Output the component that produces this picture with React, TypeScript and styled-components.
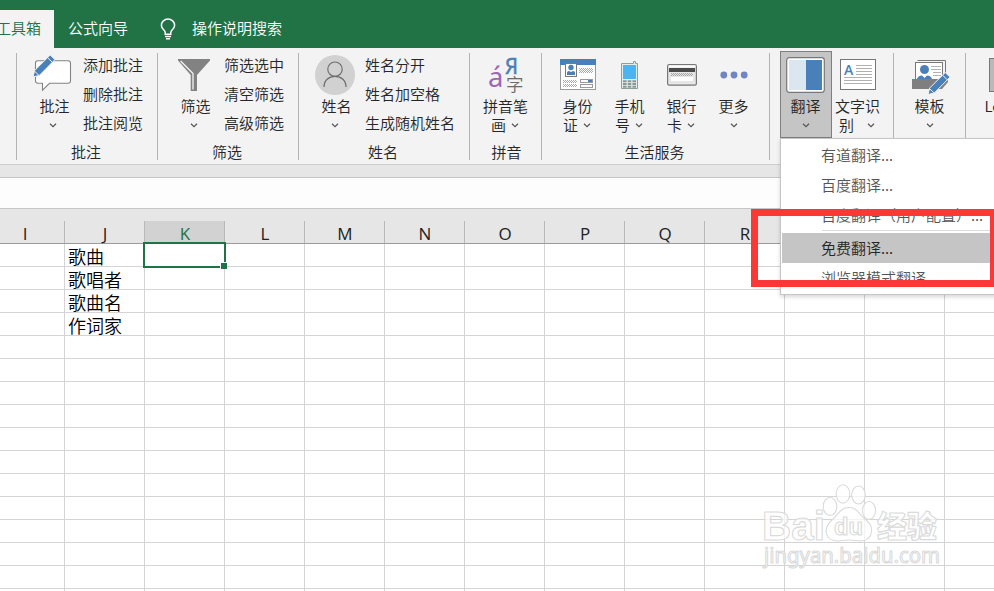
import React from "react";
import styled, { createGlobalStyle, css } from "styled-components";

const GlobalStyle = createGlobalStyle`
  * { box-sizing: border-box; }
  html, body { margin: 0; padding: 0; overflow: hidden; }
  body {
    font-family: "Noto Sans CJK SC", "Noto Sans", sans-serif;
    font-size: 15px;
    font-weight: 350;
    color: #262626;
    background: #fff;
  }
`;

const Window = styled.div`
  position: relative;
  width: 994px;
  height: 591px;
  overflow: hidden;
  display: flex;
  flex-direction: column;
  white-space: nowrap;
`;

const TabBar = styled.header`
  flex: none;
  height: 48px;
  padding-top: 10px;
  display: flex;
  background: #217346;
  color: #fff;
`;

const Tab = styled.div<{ $active?: boolean; $width: number }>`
  width: ${(p) => p.$width}px;
  display: flex;
  align-items: center;
  justify-content: ${(p) => (p.$active ? "flex-end" : "center")};
  padding-right: ${(p) => (p.$active ? 13 : 1)}px;
  padding-bottom: 4px;
  color: ${(p) => (p.$active ? "#217346" : "#fff")};
  background: ${(p) => (p.$active ? "#f3f3f3" : "transparent")};
`;

const TellMe = styled.div`
  margin-left: 17px;
  display: flex;
  align-items: center;
  gap: 15px;
`;

const TellMeText = styled.span`
  padding: 0 0 4px 1px;
`;

const Ribbon = styled.section`
  flex: none;
  height: 117px;
  padding-left: 16px;
  display: flex;
  background: #f3f3f3;
  border-bottom: 1px solid #cfcfcf;
`;

const Divider = styled.div`
  flex: none;
  width: 1px;
  height: 107px;
  margin-top: 5px;
  background: #b4b4b4;
`;

const Group = styled.div<{ $width: number }>`
  flex: none;
  width: ${(p) => p.$width}px;
  display: flex;
  flex-direction: column;
`;

const GroupBody = styled.div<{ $pad: number }>`
  height: 91px;
  padding: 3px 0 0 ${(p) => p.$pad}px;
  display: flex;
`;

const GroupName = styled.div<{ $shift?: number }>`
  height: 25px;
  line-height: 25px;
  text-align: center;
  text-indent: ${(p) => -(p.$shift || 0)}px;
`;

const TallButton = styled.div<{ $pressed?: boolean }>`
  flex: none;
  width: 52px;
  height: 87px;
  display: flex;
  flex-direction: column;
  align-items: center;
  ${(p) =>
    p.$pressed &&
    css`
      background: #c5c5c5;
      box-shadow: inset 0 0 0 1px #7f7f7f;
    `}
`;

const IconArt = styled.svg`
  flex: none;
  width: 52px;
  height: 45px;
  overflow: visible;
`;

const TallLabel = styled.div<{ $shift?: number }>`
  height: 19px;
  line-height: 19px;
  padding-left: ${(p) => (p.$shift || 0) * 2}px;
  margin-left: -1px;
`;

const TallFoot = styled.div<{ $gap?: number; $tailed?: boolean }>`
  height: 19px;
  line-height: 19px;
  display: flex;
  align-items: center;
  gap: ${(p) => p.$gap ?? 5}px;
  padding-right: ${(p) => (p.$tailed ? 2 : 0)}px;
`;

const ChevronArt = styled.svg`
  margin-top: 2px;
`;

const CommandList = styled.div`
  display: flex;
  flex-direction: column;
  margin: -1px 0 0 4px;
`;

const Command = styled.div`
  height: 29px;
  line-height: 29px;
`;

const Strip = styled.div`
  flex: none;
  height: 13px;
  background: #e6e6e6;
  border-bottom: 1px solid #c6c6c6;
`;

const FormulaBar = styled.div`
  flex: none;
  height: 31px;
  background: #fdfdfd;
  border-bottom: 1px solid #c6c6c6;
`;

const gridColumns = css`
  display: grid;
  grid-template-columns: 65px repeat(12, 80px);
`;

const ColumnHeads = styled.div`
  flex: none;
  height: 35px;
  padding-top: 12px;
  background: #e6e6e6;
  border-bottom: 1px solid #9b9b9b;
  ${gridColumns}
`;

const ColumnHead = styled.div<{ $selected?: boolean; $first?: boolean }>`
  height: 22px;
  line-height: 25px;
  font-family: "Open Sans", "Noto Sans", sans-serif;
  font-weight: 400;
  font-size: 17px;
  text-align: center;
  padding-left: ${(p) => (p.$first ? 0 : 1)}px;
  padding-right: ${(p) => (p.$first ? 14 : 0)}px;
  color: ${(p) => (p.$selected ? "#217346" : "#222")};
  background: ${(p) => (p.$selected ? "#d2d2d2" : "transparent")};
  border-right: 1px solid #b9b9b9;
`;

const Row = styled.div`
  flex: none;
  height: 23px;
  grid-template-rows: 23px;
  ${gridColumns}
`;

const Cell = styled.div`
  position: relative;
  height: 23px;
  border-right: 1px solid #d4d4d4;
  border-bottom: 1px solid #d4d4d4;
  padding-left: 3px;
  font-size: 18px;
  line-height: 24px;
  color: #000;
`;

const Selection = styled.div`
  position: absolute;
  z-index: 1;
  inset: -2px -2px -2px -2px;
  border: 2px solid #217346;
  &::after {
    content: "";
    position: absolute;
    right: -3px;
    bottom: -3px;
    width: 6px;
    height: 6px;
    background: #217346;
    border: 1px solid #fff;
    border-right: 0;
    border-bottom: 0;
  }
`;

const Menu = styled.div`
  position: absolute;
  z-index: 3;
  left: 780px;
  top: 138px;
  width: 230px;
  height: 157px;
  padding: 1px 0 0 1px;
  background: #fff;
  border: 1px solid #c6c6c6;
  box-shadow: 0 2px 4px rgba(0, 0, 0, 0.16);
`;

const MenuItem = styled.div<{ $hot?: boolean }>`
  height: 30px;
  line-height: 30px;
  padding-left: 39px;
  color: ${(p) => (p.$hot ? "#262626" : "#555")};
  background: ${(p) => (p.$hot ? "#c5c5c5" : "transparent")};
`;

const MenuRule = styled.div`
  height: 1px;
  margin: 0 0 2px 40px;
  background: #dcdcdc;
`;

const Marker = styled.div`
  position: absolute;
  z-index: 4;
  left: 751px;
  top: 209px;
  width: 246px;
  height: 78px;
  border: 7px solid #fc3836;
`;

const Watermark = styled.svg`
  position: absolute;
  z-index: 2;
  left: 755px;
  top: 480px;
  width: 200px;
  height: 95px;
`;

const Chevron = () => (
  <ChevronArt width="8" height="5" viewBox="0 0 8 5">
    <path d="M1 0.8 L4 3.6 L7 0.8" fill="none" stroke="#555" strokeWidth="1.2" />
  </ChevronArt>
);

const Bulb = () => (
  <svg width="16" height="22" viewBox="0 0 16 22" fill="none" stroke="#fff" strokeWidth="1.5">
    <path d="M5.2 16.2 V14.2 C5.2 12 1.4 11 1.4 7.4 A6.6 6.4 0 0 1 14.6 7.4 C14.6 11 10.8 12 10.8 14.2 V16.2 Z" />
    <path d="M5 18.4 H11 M6 20.7 H10" />
  </svg>
);

const Pencil = ({ x, y }: { x: number; y: number }) => (
  <g transform={`translate(${x} ${y})`}>
    <path d="M0 22 L1.6 15.6 L17.2 0 L22 4.6 L6.4 20.4 Z" fill="#4a80b9" stroke="#f3f3f3" strokeWidth="1" />
    <path d="M14.6 2.7 L19.4 7.4 M1.4 16 L6 20.4" stroke="#f3f3f3" strokeWidth="1" />
  </g>
);

const CommentIcon = () => (
  <IconArt viewBox="0 0 52 45">
    <path
      d="M10.5 9.8 H41 Q43.5 9.8 43.5 12.3 V29.8 Q43.5 32.3 41 32.3 H22.5 L15.5 39.2 V32.3 H11 Q8.5 32.3 8.5 29.8 V12 Q8.5 9.8 10.5 9.8 Z"
      fill="#fff"
      stroke="#848484"
      strokeWidth="1.1"
    />
    <Pencil x={6} y={4} />
  </IconArt>
);

const FunnelIcon = () => (
  <IconArt viewBox="0 0 52 45">
    <path d="M10 8 H42 V9.6 L29 24 V40 H22.7 V24 L10 9.6 Z" fill="#828282" />
    <path d="M12.6 10 L25 22.6 V38.5" fill="none" stroke="#f5f5f5" strokeWidth="1.3" />
  </IconArt>
);

const PersonIcon = () => (
  <IconArt viewBox="0 0 52 45">
    <circle cx="26" cy="24" r="20" fill="#d1d1d1" />
    <g fill="none" stroke="#6d6d6d" strokeWidth="1.2">
      <circle cx="26" cy="18.2" r="7.2" />
      <path d="M15 36 C15 29.5 19.5 25.4 26 25.4 S37 29.5 37 36" />
    </g>
  </IconArt>
);

const PinyinIcon = () => (
  <IconArt viewBox="0 0 52 45" fontFamily="Noto Sans, sans-serif" fontWeight="400">
    <text x="8" y="36" fontSize="27.5" fill="#9b68b8">á</text>
    <text x="25" y="22.8" fontSize="22" fill="#4a80b9" stroke="#4a80b9" strokeWidth="0.5" textLength="13" lengthAdjust="spacingAndGlyphs">Я</text>
    <text x="26" y="39.5" fontSize="17.5" fill="#6b6b6b" fontFamily="Noto Sans CJK SC" fontWeight="350">字</text>
  </IconArt>
);

const IdCardIcon = () => (
  <IconArt viewBox="0 0 52 45">
    <rect x="8.5" y="8.5" width="35" height="30" fill="#fff" stroke="#9a9a9a" />
    <rect x="8" y="8" width="36" height="6" fill="#4a80b9" />
    <rect x="13.5" y="12.5" width="11" height="13" fill="#fff" stroke="#7a7a7a" />
    <circle cx="19" cy="16.5" r="2.7" fill="#4a80b9" />
    <path d="M15 24 V21.5 Q15 20 17 20 L19 21 L21 20 Q23 20 23 21.5 V24 Z" fill="#4a80b9" />
    <g stroke="#a8a8a8" strokeWidth="1" strokeDasharray="1 1">
      <path d="M27 17.5 H41 M27 19.5 H41 M27 21.5 H41 M11 29.5 H25 M11 31.5 H25 M11 33.5 H25 M11 35.5 H25" />
      <path d="M28 18.5 H41 M28 20.5 H41 M12 30.5 H25 M12 34.5 H25" />
    </g>
    <g fill="#fff" stroke="#9a9a9a">
      <rect x="28.5" y="28.5" width="12" height="3" />
      <rect x="28.5" y="33.5" width="12" height="3" />
    </g>
    <rect x="36" y="29" width="4" height="2" fill="#4a80b9" />
  </IconArt>
);

const PhoneIcon = () => (
  <IconArt viewBox="0 0 52 45">
    <path d="M17.5 12.5 H29.5 V10.5 H31.5 V12.5 H33.5 V37.5 H17.5 Z" fill="#e3eeec" stroke="#8d9e9b" />
    <rect x="19" y="14" width="13" height="14" fill="#4cb4f0" />
    <path d="M19 30.2 H32 M19 33 H32 M19 35.8 H32" stroke="#899895" strokeWidth="2" strokeDasharray="3.6 1.1" />
  </IconArt>
);

const BankCardIcon = () => (
  <IconArt viewBox="0 0 52 45">
    <rect x="11.6" y="13.6" width="28.8" height="20.6" rx="1.6" fill="#e6e6e6" stroke="#777" strokeWidth="1.2" />
    <rect x="12.6" y="14.4" width="26.8" height="2" fill="#fff" />
    <rect x="13" y="17" width="26" height="4" fill="#4b4b4b" />
    <path d="M15 22.5 H37 M16 23.5 H37 M15 24.5 H37" stroke="#a6a6a6" strokeDasharray="1 1" />
    <rect x="15" y="26" width="22" height="4" fill="#fff" />
  </IconArt>
);

const DotsIcon = () => (
  <IconArt viewBox="0 0 52 45" fill="#7185c3">
    <circle cx="15.8" cy="24" r="3.4" />
    <circle cx="26" cy="24" r="3.4" />
    <circle cx="36.2" cy="24" r="3.4" />
  </IconArt>
);

const TranslateIcon = () => (
  <IconArt viewBox="0 0 52 45">
    <rect x="6.7" y="6.7" width="37.6" height="34.6" rx="2.5" fill="#fff" stroke="#777" strokeWidth="1.2" />
    <rect x="9" y="9" width="17" height="30" fill="#dce6f1" />
    <rect x="26" y="9" width="16" height="30" fill="#4a80b9" />
  </IconArt>
);

const OcrIcon = () => (
  <IconArt viewBox="0 0 52 45">
    <rect x="8.5" y="8.5" width="35" height="30" fill="#fff" stroke="#777" />
    <text x="12" y="24" fontSize="14" fontWeight="600" fill="#4a80b9" fontFamily="Open Sans">A</text>
    <path d="M24 14.5 H40 M24 17.5 H40 M24 20.5 H40 M24 23.5 H40 M12 26.5 H40 M12 29.5 H40 M12 32.5 H40" stroke="#b1b1b1" />
  </IconArt>
);

const TemplateIcon = () => (
  <IconArt viewBox="0 0 52 45">
    <path d="M13.5 9.5 H41.5 V29" fill="none" stroke="#777" />
    <rect x="11.5" y="11.5" width="27" height="18" fill="#fff" stroke="#777" />
    <circle cx="20.5" cy="18.5" r="4.5" fill="#4a80b9" />
    <path d="M13 28 Q14 25 18 24.6 L20.5 27 L23 24.6 Q27 25 28 28 Z" fill="#4a80b9" />
    <path d="M27 15.5 H37 M27 18.5 H37 M29 21.5 H37 M29 24.5 H37" stroke="#b1b1b1" />
    <path d="M8 28 H44 V31 L38 38 H8 Z" fill="#7f7f7f" />
    <Pencil x={24} y={21.5} />
  </IconArt>
);

const EdgeIcon = () => (
  <IconArt viewBox="0 0 52 45">
    <rect x="13.5" y="7.5" width="36" height="33" fill="#b9b9b9" stroke="#777" />
  </IconArt>
);

type ToolProps = {
  icon: React.ReactNode;
  label: string;
  tail?: string;
  gap?: number;
  shift?: number;
  pressed?: boolean;
};

const Tool = ({ icon, label, tail, gap, shift, pressed }: ToolProps) => (
  <TallButton $pressed={pressed}>
    {icon}
    <TallLabel $shift={shift}>{label}</TallLabel>
    <TallFoot $gap={gap} $tailed={!!tail}>
      {tail && <span>{tail}</span>}
      <Chevron />
    </TallFoot>
  </TallButton>
);

const Commands = ({ items }: { items: string[] }) => (
  <CommandList>
    {items.map((item) => (
      <Command key={item}>{item}</Command>
    ))}
  </CommandList>
);

const columns = ["I", "J", "K", "L", "M", "N", "O", "P", "Q", "R", "S", "T", "U"];
const songFields = ["歌曲", "歌唱者", "歌曲名", "作词家"];
const rowCount = 16;

export default function App() {
  return (
    <Window>
      <GlobalStyle />
      <TabBar>
        <Tab $active $width={54}>工具箱</Tab>
        <Tab $width={89}>公式向导</Tab>
        <TellMe>
          <Bulb />
          <TellMeText>操作说明搜索</TellMeText>
        </TellMe>
      </TabBar>

      <Ribbon>
        <Divider />
        <Group $width={140}>
          <GroupBody $pad={10}>
            <Tool icon={<CommentIcon />} label="批注" shift={2} />
            <Commands items={["添加批注", "删除批注", "批注阅览"]} />
          </GroupBody>
          <GroupName $shift={2}>批注</GroupName>
        </Group>
        <Divider />
        <Group $width={140}>
          <GroupBody $pad={10}>
            <Tool icon={<FunnelIcon />} label="筛选" shift={2} />
            <Commands items={["筛选选中", "清空筛选", "高级筛选"]} />
          </GroupBody>
          <GroupName $shift={2}>筛选</GroupName>
        </Group>
        <Divider />
        <Group $width={170}>
          <GroupBody $pad={10}>
            <Tool icon={<PersonIcon />} label="姓名" shift={2} />
            <Commands items={["姓名分开", "姓名加空格", "生成随机姓名"]} />
          </GroupBody>
          <GroupName $shift={2}>姓名</GroupName>
        </Group>
        <Divider />
        <Group $width={71}>
          <GroupBody $pad={10}>
            <Tool icon={<PinyinIcon />} label="拼音笔" tail="画" gap={5} />
          </GroupBody>
          <GroupName $shift={-2}>拼音</GroupName>
        </Group>
        <Divider />
        <Group $width={227}>
          <GroupBody $pad={10}>
            <Tool icon={<IdCardIcon />} label="身份" tail="证" />
            <Tool icon={<PhoneIcon />} label="手机" tail="号" />
            <Tool icon={<BankCardIcon />} label="银行" tail="卡" />
            <Tool icon={<DotsIcon />} label="更多" />
          </GroupBody>
          <GroupName $shift={2}>生活服务</GroupName>
        </Group>
        <Divider />
        <Group $width={123}>
          <GroupBody $pad={10}>
            <Tool icon={<TranslateIcon />} label="翻译" pressed />
            <Tool icon={<OcrIcon />} label="文字识" tail="别" gap={13} />
          </GroupBody>
        </Group>
        <Divider />
        <Group $width={71}>
          <GroupBody $pad={10}>
            <Tool icon={<TemplateIcon />} label="模板" />
          </GroupBody>
        </Group>
        <Divider />
        <Group $width={71}>
          <GroupBody $pad={10}>
            <Tool icon={<EdgeIcon />} label="Logo" shift={-0} />
          </GroupBody>
        </Group>
      </Ribbon>

      <Strip />
      <FormulaBar />

      <ColumnHeads>
        {columns.map((name, i) => (
          <ColumnHead key={name} $selected={name === "K"} $first={i === 0}>
            {name}
          </ColumnHead>
        ))}
      </ColumnHeads>
      {Array.from({ length: rowCount }, (_, r) => (
        <Row key={r}>
          {columns.map((name) => (
            <Cell key={name}>
              {name === "J" && songFields[r]}
              {name === "K" && r === 0 && <Selection />}
            </Cell>
          ))}
        </Row>
      ))}

      <Watermark viewBox="0 0 200 95" fill="#fff" fillOpacity="0.7" stroke="#dadada" strokeWidth="1.1" strokeLinejoin="round">
        <text x="7" y="60" fontFamily="Liberation Sans" fontWeight="700" fontSize="41" textLength="63" lengthAdjust="spacingAndGlyphs">Bai</text>
        <ellipse cx="75" cy="26.5" rx="6.8" ry="9" />
        <ellipse cx="88" cy="14" rx="6.8" ry="9.2" />
        <ellipse cx="103.5" cy="15" rx="6.8" ry="9" />
        <ellipse cx="114" cy="30.5" rx="6.5" ry="9" />
        <path d="M94 27.5 C103 27.5 105 36 111 40 C120 47 118 61 105 61 C101 61 99 60 94 60 S87 61 83 61 C69 61 68 48 77 40 C83 35 85 27.5 94 27.5 Z" />
        <text x="79" y="55" fontFamily="Liberation Sans" fontWeight="700" fontSize="23" textLength="29" lengthAdjust="spacingAndGlyphs">du</text>
        <text x="122" y="57" fontFamily="Noto Sans CJK SC" fontWeight="900" fontSize="30" textLength="60" lengthAdjust="spacingAndGlyphs">经验</text>
        <text x="9" y="83" fontFamily="Noto Sans" fontWeight="400" fontSize="21" textLength="176" lengthAdjust="spacingAndGlyphs">jingyan.baidu.com</text>
      </Watermark>

      <Menu>
        <MenuItem>有道翻译...</MenuItem>
        <MenuItem>百度翻译...</MenuItem>
        <MenuItem>百度翻译（用户配置）...</MenuItem>
        <MenuRule />
        <MenuItem $hot>免费翻译...</MenuItem>
        <MenuItem>浏览器模式翻译</MenuItem>
      </Menu>
      <Marker />
    </Window>
  );
}
